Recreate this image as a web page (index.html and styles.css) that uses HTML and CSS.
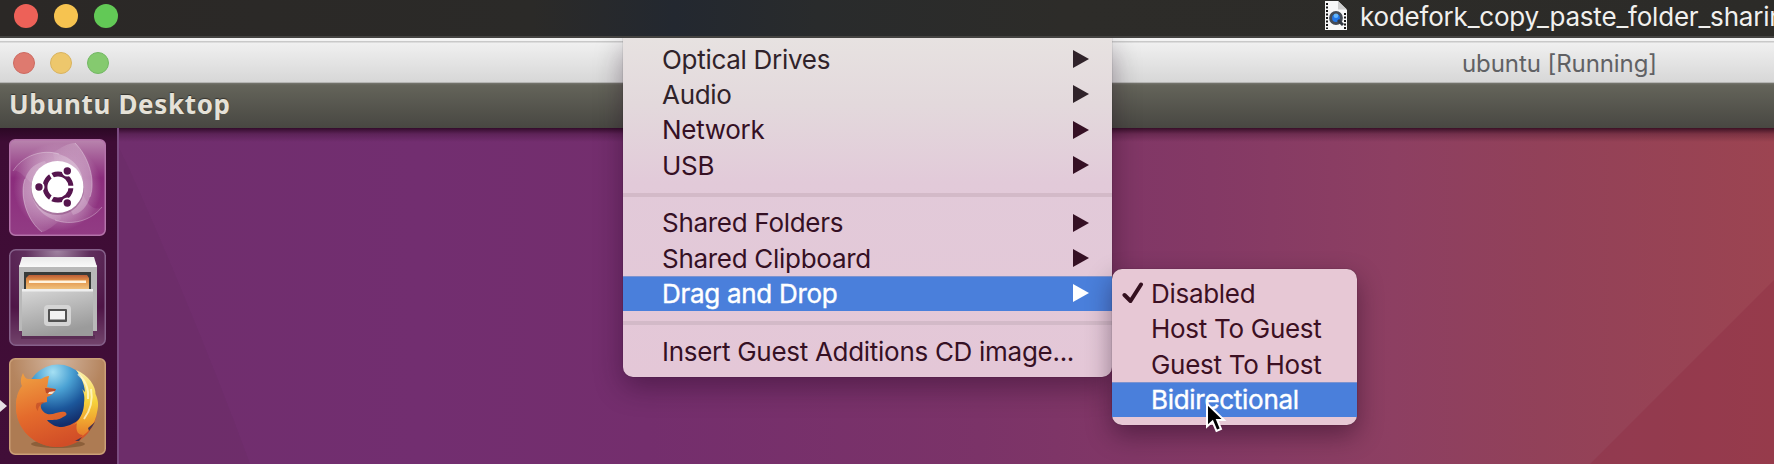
FILE: index.html
```html
<!DOCTYPE html>
<html lang="en">
<head>
<meta charset="utf-8">
<title>ubuntu [Running]</title>
<link rel="stylesheet" href="styles.css">
</head>
<body>
<div class="screen">
  <header class="player-bar">
    <div class="lights">
      <span class="light red"></span><span class="light yellow"></span><span class="light green"></span>
    </div>
    <div class="player-title">
      <svg class="doc-icon" width="22" height="29" viewBox="0 0 22 29">
        <path d="M0 0H13L22 9V29H0Z" fill="#f8f8f8"/>
        <path d="M13 0V8.500H22Z" fill="#cfcfcf"/>
        <path d="M2 2V28" stroke="#171717" stroke-width="2" stroke-dasharray="2 1.500"/>
        <path d="M20 12V28" stroke="#171717" stroke-width="2" stroke-dasharray="2 1.500"/>
        <circle cx="11" cy="17" r="5.400" fill="#2377e8" stroke="#454b55" stroke-width="3"/>
        <circle cx="11" cy="14.800" r="2.300" fill="#65b6fa"/>
        <path d="M13 19L18 24" stroke="#333943" stroke-width="3"/>
      </svg>
      <span class="player-name">kodefork_copy_paste_folder_sharin</span>
    </div>
  </header>

  <div class="vm-bar">
    <div class="lights small">
      <span class="light red"></span><span class="light yellow"></span><span class="light green"></span>
    </div>
    <span class="vm-title">ubuntu [Running]</span>
  </div>

  <div class="panel"><span class="panel-title">Ubuntu Desktop</span></div>

  <main class="desktop">
    <nav class="launcher">
      <svg class="tile" viewBox="0 0 97 97">
        <defs>
          <linearGradient id="dash" x1="0" y1="0" x2="0" y2="1"><stop offset="0" stop-color="#b985ae"/><stop offset=".4" stop-color="#8b2c7c"/><stop offset="1" stop-color="#923c84"/></linearGradient>
          <radialGradient id="dashglow" cx=".5" cy=".5" r=".5"><stop offset=".5" stop-color="#fff" stop-opacity=".38"/><stop offset="1" stop-color="#fff" stop-opacity="0"/></radialGradient>
          <linearGradient id="swirlA" x1="0" y1="0" x2="1" y2="0"><stop offset="0" stop-color="#fff" stop-opacity=".05"/><stop offset="1" stop-color="#fff" stop-opacity=".32"/></linearGradient>
          <linearGradient id="swirlB" x1="1" y1="0" x2="0" y2="0"><stop offset="0" stop-color="#fff" stop-opacity=".05"/><stop offset="1" stop-color="#fff" stop-opacity=".32"/></linearGradient>
        </defs>
        <rect x=".75" y=".75" width="95.500" height="95.500" rx="5.500" fill="url(#dash)" stroke="#b473aa" stroke-width="1.500"/>
        <circle cx="48.500" cy="48" r="44" fill="url(#dashglow)"/>
        <path d="M4 32C14 16 34 10 50 15C68 21 76 34 74 52L48 48L22 44C14 36 8 30 4 32Z" fill="url(#swirlA)"/>
        <path d="M66 4C80 18 87 42 81 58C78 68 72 74 64 76L50 48L44 14C52 8 60 4 66 4Z" fill="url(#swirlA)"/>
        <path d="M93 68C82 82 62 87 46 81C30 76 22 62 22 48L48 48L74 56C80 68 86 72 93 68Z" fill="url(#swirlB)"/>
        <path d="M33 93C18 82 10 56 16 40C20 28 28 24 36 22L48 48L52 80C46 86 38 92 33 93Z" fill="url(#swirlB)"/>
        <path d="M4 32C14 16 34 10 50 15M66 4C80 18 87 42 81 58M93 68C82 82 62 87 46 81M33 93C18 82 10 56 16 40" fill="none" stroke="#fff" stroke-width="1" opacity=".3"/>
        <circle cx="48.500" cy="49.500" r="26.500" fill="#5c1651" opacity=".3"/>
        <circle cx="48.500" cy="48" r="26" fill="#fff"/>
        <circle cx="49" cy="48" r="13" fill="none" stroke="#56154e" stroke-width="4.800"/>
        <path d="M49 48L66 48M49 48L40.500 33.300M49 48L40.500 62.700" stroke="#fff" stroke-width="2.600"/>
        <circle cx="49" cy="48" r="9" fill="#fff"/>
        <g fill="#56154e" stroke="#fff" stroke-width="1.800"><circle cx="30" cy="48" r="4.600"/><circle cx="58.300" cy="32" r="4.600"/><circle cx="58.300" cy="64" r="4.600"/></g>
      </svg>

      <svg class="tile" viewBox="0 0 97 97">
        <defs>
          <radialGradient id="glass" cx=".5" cy="0" r=".75"><stop offset="0" stop-color="#a184a2"/><stop offset=".45" stop-color="#5f2e5c"/><stop offset="1" stop-color="#4f1547"/></radialGradient>
          <linearGradient id="glassb" x1="0" y1="0" x2="0" y2="1"><stop offset=".6" stop-color="#fff" stop-opacity="0"/><stop offset="1" stop-color="#fff" stop-opacity=".2"/></linearGradient>
          <linearGradient id="steel" x1="0" y1="0" x2=".35" y2="1"><stop offset="0" stop-color="#d8d8d8"/><stop offset="1" stop-color="#9b9b9b"/></linearGradient>
          <linearGradient id="lid" x1="0" y1="0" x2="0" y2="1"><stop offset="0" stop-color="#e9e9e9"/><stop offset="1" stop-color="#fafafa"/></linearGradient>
          <linearGradient id="paper" x1="0" y1="0" x2="0" y2="1"><stop offset="0" stop-color="#bb5d36"/><stop offset=".4" stop-color="#e29349"/><stop offset="1" stop-color="#efc17d"/></linearGradient>
        </defs>
        <rect x=".75" y=".75" width="95.500" height="95.500" rx="6" fill="url(#glass)"/>
        <rect x=".75" y=".75" width="95.500" height="95.500" rx="6" fill="url(#glassb)" stroke="#85618a" stroke-width="1.500"/>
        <path d="M12 86H86V90H12Z" fill="#2a0c28" opacity=".25"/>
        <path d="M10 16H88V82H10Z" fill="#b9b9b9"/>
        <path d="M13 8H85L88 18H10Z" fill="url(#lid)"/>
        <path d="M15 23H82V40H15Z" fill="#383b39"/>
        <path d="M17 29L20 26H78L80 29V40H17Z" fill="url(#paper)"/>
        <path d="M20 31.500H77V34H20Z" fill="#fff4df"/>
        <path d="M13 40H84V87H13Z" fill="url(#steel)"/>
        <path d="M13 40H84V42.500H13Z" fill="#eee"/>
        <rect x="35" y="56" width="27" height="21" rx="4" fill="#d4d4d4"/>
        <rect x="39" y="60" width="19" height="13" rx="1" fill="#515151"/>
        <rect x="41" y="62" width="15" height="8.500" fill="#f2f2f2"/>
      </svg>

      <svg class="tile" viewBox="0 0 97 97">
        <defs>
          <radialGradient id="tan" cx=".5" cy="0" r=".8"><stop offset="0" stop-color="#d3b6a0"/><stop offset=".6" stop-color="#b5855f"/><stop offset="1" stop-color="#ad7b53"/></radialGradient>
          <radialGradient id="globe" cx=".42" cy=".12" r=".85"><stop offset="0" stop-color="#a5e0f3"/><stop offset=".35" stop-color="#4ba2d4"/><stop offset=".7" stop-color="#1c579b"/><stop offset="1" stop-color="#132e6b"/></radialGradient>
          <linearGradient id="fox" x1=".3" y1="0" x2=".6" y2="1"><stop offset="0" stop-color="#ee9b40"/><stop offset=".5" stop-color="#e46b2c"/><stop offset="1" stop-color="#d14d27"/></linearGradient>
          <linearGradient id="tail" x1="0" y1="0" x2="0" y2="1"><stop offset="0" stop-color="#fbf2b0"/><stop offset=".45" stop-color="#f6d23c"/><stop offset=".72" stop-color="#f0a52f"/><stop offset="1" stop-color="#e2702a"/></linearGradient>
        </defs>
        <rect x=".75" y=".75" width="95.500" height="95.500" rx="5.500" fill="url(#tan)" stroke="#cba078" stroke-width="1.500"/>
        <ellipse cx="49" cy="86" rx="27" ry="4" fill="#593617" opacity=".4"/>
        <path d="M7 48C7 72 26 89 49 89C71 89 86 72 88 54L49 30L14 28C9 34 7 41 7 48Z" fill="url(#fox)"/>
        <circle cx="49" cy="38" r="31.500" fill="url(#globe)"/>
        <path d="M67 12C80 17 87 29 86.500 36C89.500 42 89.500 48 88.500 52C86 68 78 77 66 82C60 80 60 72 66 66C72 60 75 52 75 45C76 40 75 34 73 31L76 34C75 25 72 18 67 12Z" fill="url(#tail)"/>
        <path d="M69 16C76 22 80 31 79 41M82 31C84 42 81 53 75 61" fill="none" stroke="#fffbd4" stroke-width="2" opacity=".75"/>
        <path d="M14 15C15 18 17 21 19 21C24 21 30 21 32 21C35 19 38 18 40 18C39 22 39 26 38 29L46 31C46 35 41 38 38 39V44L33 45C30 48 33 53 36 55C43 59 49 52 56 54C59 56 57 58 54 59C50 62 46 62 38 62C44 70 58 72 68 65C66 74 70 77 74 77C67 84 58 89 49 89C25 89 7 71 7 49C7 37 10 32 13 28C11 24 12 19 14 15Z" fill="url(#fox)"/>
        <path d="M36 30L47 31C46 35 41 36 37 35Z" fill="#bd4b28"/><path d="M40 34L46 33L43 36L39 36Z" fill="#f4e1d0"/>
        <path d="M34 44L28 45C26 48 27 51 29 53C29 49 31 47 35 45Z" fill="#c04c28" opacity=".7"/>
        <path d="M79 70L86 64L83 69L80 73ZM66 83L73 79L70 83Z" fill="#48334c"/>
      </svg>
      <span class="running-mark"></span>
    </nav>
    <div class="wallpaper">
      <svg class="facets" viewBox="0 0 1655 336" preserveAspectRatio="none">
        <path d="M0 20C30 80 100 250 131 336H0Z" fill="#682b62" opacity=".3"/>
        <path d="M1655 152V336H1471Z" fill="#8c2b42" opacity=".36"/>
      </svg>
    </div>
  </main>

  <ul class="menu devices">
    <li class="item"><span>Optical Drives</span><i class="arrow"></i></li>
    <li class="item"><span>Audio</span><i class="arrow"></i></li>
    <li class="item"><span>Network</span><i class="arrow"></i></li>
    <li class="item"><span>USB</span><i class="arrow"></i></li>
    <li class="rule"></li>
    <li class="item"><span>Shared Folders</span><i class="arrow"></i></li>
    <li class="item"><span>Shared Clipboard</span><i class="arrow"></i></li>
    <li class="item active"><span>Drag and Drop</span><i class="arrow"></i></li>
    <li class="rule second"></li>
    <li class="item"><span>Insert Guest Additions CD image...</span></li>
  </ul>

  <ul class="menu modes">
    <li class="item"><svg class="check" width="22" height="22" viewBox="0 0 22 22"><path d="M2.500 13L8.500 19L19 2.500" fill="none" stroke="#34101f" stroke-width="4" stroke-linecap="round" stroke-linejoin="round"/></svg><span>Disabled</span></li>
    <li class="item"><span>Host To Guest</span></li>
    <li class="item"><span>Guest To Host</span></li>
    <li class="item active"><span>Bidirectional</span></li>
  </ul>

  <svg class="cursor" width="24" height="34" viewBox="0 0 24 34"><path d="M2 2.500V25.500L7.500 20.500L11.500 30L16 28L12.200 19H19Z" fill="#000" stroke="#fff" stroke-width="2"/></svg>
</div>
</body>
</html>
```
FILE: styles.css
```css
* { box-sizing: border-box; }
body { margin: 0; font-family: Inter, "Liberation Sans", sans-serif; }
ul { list-style: none; margin: 0; padding: 0; }

.screen {
  position: relative;
  display: flex;
  flex-direction: column;
  width: 1774px;
  height: 464px;
  overflow: hidden;
}

.player-bar {
  display: flex;
  justify-content: space-between;
  height: 38px;
  flex: none;
  padding-left: 14px;
  background: linear-gradient(90deg, #2b2826 0, #2b2a28 30%, #232830 38%, #292b2c 46%, #2d2c29 60%, #2c2b28 100%);
  border-bottom: 2px solid #444341;
}
.lights { display: flex; gap: 16px; padding-top: 4px; }
.light { width: 24px; height: 24px; border-radius: 50%; }
.red { background: #ed6158; }
.yellow { background: #f6c350; }
.green { background: #62c956; }
.player-title { display: flex; width: 449px; gap: 13px; }
.doc-icon { margin-top: 1px; flex: none; }
.player-name {
  color: #f1f0ee;
  font-size: 26px;
  line-height: 34px;
  letter-spacing: -.2px;
  white-space: nowrap;
}

.vm-bar {
  display: flex;
  justify-content: space-between;
  height: 45px;
  flex: none;
  padding: 0 117px 0 13px;
  background: linear-gradient(#f3f3f3 0, #f3f3f3 3px, #c9c9c9 3px, #c9c9c9 4px, #f0f0f0 5px, #d7d7d7 44px, #b5b5b3 44px);
}
.small { gap: 15px; padding-top: 14px; }
.small .light { width: 22px; height: 22px; border: 1px solid; }
.small .red { background: #de7a6f; border-color: #cd6a61; }
.small .yellow { background: #edc76c; border-color: #d9b35f; }
.small .green { background: #85ca6f; border-color: #73b864; }
.vm-title { color: #606164; font-size: 24px; line-height: 51px; letter-spacing: -.08px; white-space: nowrap; }

.panel {
  height: 45px;
  flex: none;
  padding-left: 9px;
  background: linear-gradient(#77776f 0, #64645a 2px, #484742 100%);
}
.panel-title {
  color: #e5e1d8;
  font: bold 26px/43px "Noto Sans", "Open Sans", sans-serif;
  letter-spacing: .65px;
  text-shadow: 0 -1px 1px #34332f;
  white-space: nowrap;
}

.desktop { display: flex; flex: 1; min-height: 0; }
.launcher {
  position: relative;
  display: flex;
  flex-direction: column;
  gap: 12.500px;
  width: 119px;
  padding: 11px 0 0 9px;
  border-right: 2px solid #7b4b81;
  background: linear-gradient(#2b0824 0, #3e0c35 14px, #410e38 100%);
}
.tile { display: block; width: 97px; height: 97px; flex: none; }
.running-mark {
  position: absolute;
  left: 0;
  top: 272px;
  border-left: 7px solid #e5e0e4;
  border-top: 6px solid transparent;
  border-bottom: 6px solid transparent;
}
.wallpaper {
  flex: 1;
  background:
    linear-gradient(rgba(30, 0, 20, .75), rgba(30, 0, 20, .25) 6px, transparent 14px),
    linear-gradient(90deg, #702e6d 0, #722e70 18%, #742e6d 32%, #7b3368 52%, #843965 66%, #8d3f62 77%, #924159 86%, #9c4451 100%);
}
.facets { display: block; width: 100%; height: 100%; }

.menu { position: absolute; color: #351024; font-size: 26px; letter-spacing: -.29px; }
.devices {
  left: 623px;
  top: 38px;
  width: 489px;
  height: 339px;
  padding-top: 3.500px;
  border-radius: 0 0 10px 10px;
  background: linear-gradient(#e7e2e1 0, #e3d9dc 65px, #e2cad9 145px, #e4c7d7 100%);
  box-shadow: 0 0 1px rgba(0, 0, 0, .6), 0 10px 28px rgba(25, 0, 25, .38);
  clip-path: inset(0 -60px -60px -60px);
}
.modes {
  left: 1112px;
  top: 269px;
  width: 245px;
  height: 156px;
  padding-top: 7px;
  border-radius: 10px;
  background: #e7c8d5;
  box-shadow: 0 0 1px rgba(0, 0, 0, .6), 0 10px 26px rgba(25, 0, 25, .42);
}
.item {
  display: flex;
  align-items: center;
  justify-content: space-between;
  height: 35.300px;
  padding: 0 23px 0 39px;
  line-height: 35px;
  white-space: nowrap;
}
.item:nth-child(-n+2) { color: #30232a; }
.modes .item { position: relative; justify-content: flex-start; color: #3c1023; }
.item.active, .modes .item.active { color: #fff; background: #4a7fdb; box-shadow: inset 0 1px #7c93d0; }
.active span { -webkit-text-stroke: .4px #fff; }
.arrow {
  border-left: 16px solid currentColor;
  border-top: 9px solid transparent;
  border-bottom: 9px solid transparent;
}
.rule { height: 4px; margin: 10.300px 0 8.200px; background: #d3bac8; }
.rule.second { margin: 9.500px 0 9px; }
.check { position: absolute; left: 10px; top: 6px; }
.cursor { position: absolute; left: 1205px; top: 401px; }
```
